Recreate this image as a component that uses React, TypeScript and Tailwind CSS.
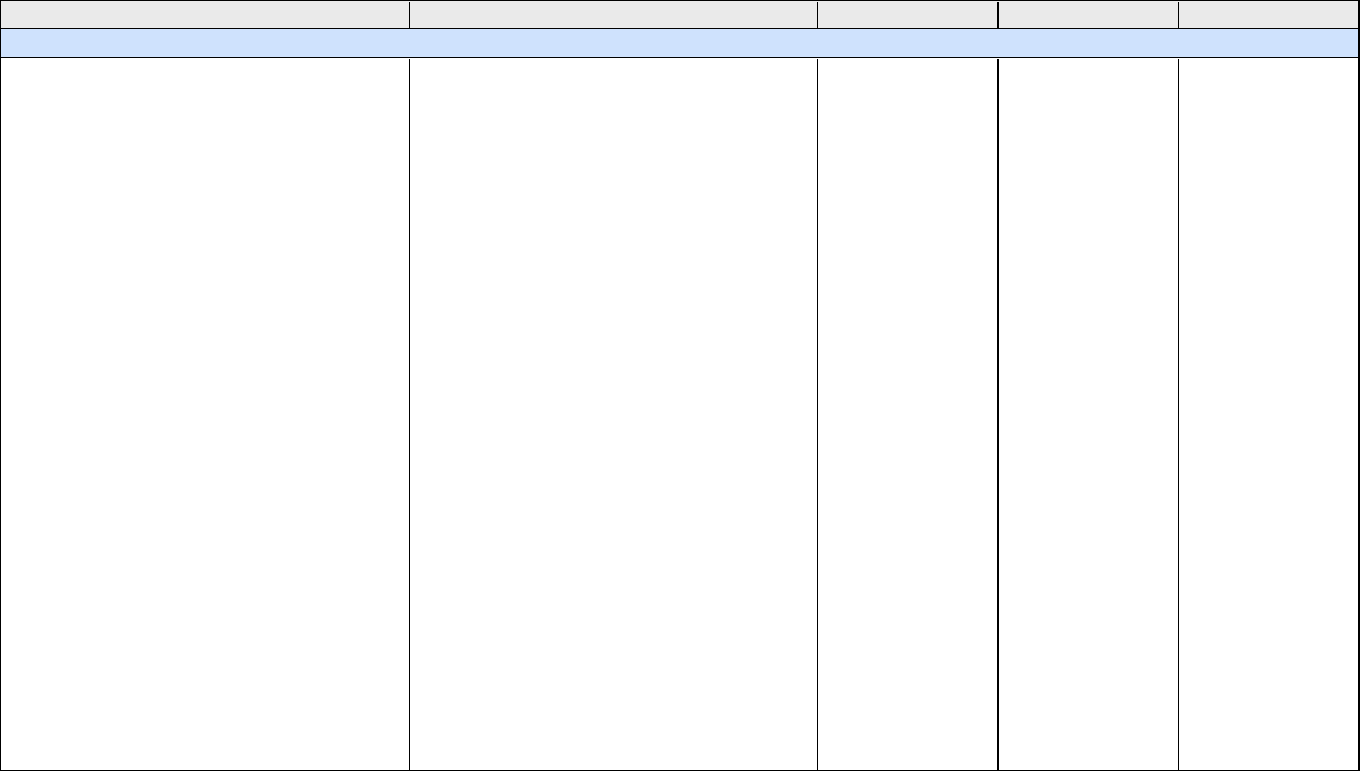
const columns = [
  { w: "w-[408px]", divider: "w-px" },
  { w: "w-[407px]", divider: "w-px" },
  { w: "w-[179px]", divider: "w-[2px]" },
  { w: "w-[179px]", divider: "w-px" },
  { w: "flex-1", divider: "" },
];

const ColumnRow = ({ className }: { className: string }) => (
  <div className={`flex ${className}`}>
    {columns.map((col, i) => (
      <div key={i} className={`flex ${col.w === "flex-1" ? "flex-1" : ""}`}>
        <div className={`${col.w === "flex-1" ? "flex-1" : col.w} h-full`} />
        {col.divider && <div className={`${col.divider} bg-black mt-px`} />}
      </div>
    ))}
  </div>
);

const App = () => {
  return (
    <div className="w-[1360px] h-[772px] bg-white font-['Liberation_Sans',sans-serif]">
      <div className="h-[771px] flex flex-col border-l border-t border-b border-r-2 border-black">
        {/* header */}
        <ColumnRow className="h-[27px] bg-[#eaeaea]" />
        <div className="h-px bg-black" />
        {/* group band */}
        <div className="h-[28px] bg-[#cfe2fd]" />
        <div className="h-px bg-black" />
        {/* body */}
        <ColumnRow className="flex-1 bg-white" />
      </div>
    </div>
  );
};

export default App;
